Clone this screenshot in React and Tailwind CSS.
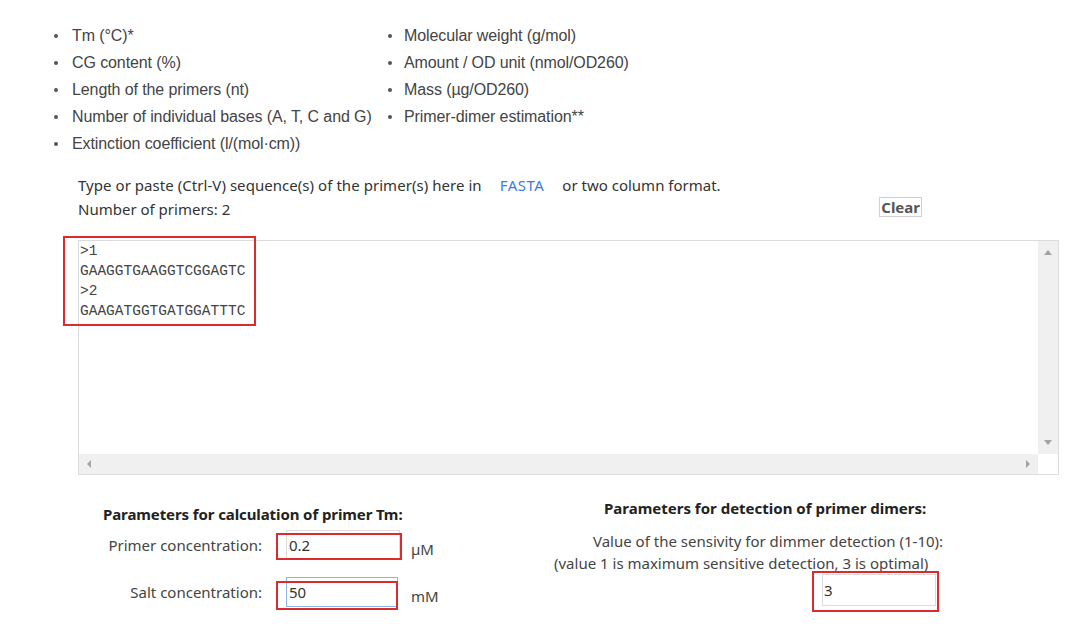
import React from "react";

const leftItems = [
  "Tm (°C)*",
  "CG content (%)",
  "Length of the primers (nt)",
  "Number of individual bases (A, T, C and G)",
  "Extinction coefficient (l/(mol·cm))",
];

const rightItems = [
  "Molecular weight (g/mol)",
  "Amount / OD unit (nmol/OD260)",
  "Mass (µg/OD260)",
  "Primer-dimer estimation**",
];

function Bullet({ children, gap }) {
  return (
    <li className="flex items-center h-[27px]">
      <span className={`w-[4px] h-[4px] rounded-full bg-[#555] shrink-0 ${gap}`} />
      <span>{children}</span>
    </li>
  );
}

function App() {
  return (
    <div className="w-[1070px] h-[628px] bg-white overflow-hidden text-[#444]">
      {/* feature list */}
      <div className="flex pt-[22px] pl-[54px] font-['Liberation_Sans',Arial,sans-serif] text-[16px] tracking-[-0.1px]">
        <ul className="w-[334px]">
          {leftItems.map((item) => (
            <Bullet key={item} gap="mr-[14px]">{item}</Bullet>
          ))}
        </ul>
        <ul>
          {rightItems.map((item) => (
            <Bullet key={item} gap="mr-[12px]">{item}</Bullet>
          ))}
        </ul>
      </div>

      <div className="ml-[78px] mt-[16px] font-['Noto_Sans',sans-serif] text-[15px] text-[#333]">
        <div className="flex items-center h-[24px]">
          <span className="tracking-[0.05px]">Type or paste (Ctrl-V) sequence(s) of the primer(s) here in</span>
          <a className="ml-[18px] text-[#3b7ddd] tracking-[0.5px]">FASTA</a>
          <span className="ml-[18px]">or two column format.</span>
        </div>
        <div className="flex items-center justify-between w-[844px] h-[24px]">
          <span>Number of primers: 2</span>
          <button className="h-[20px] px-[1px] border border-[#d0d0d0] bg-white font-bold text-[#555] leading-[18px] -mt-[4px]">
            Clear
          </button>
        </div>
      </div>

      {/* sequence box */}
      <div className="relative ml-[78px] mt-[19px] w-[981px] h-[235px] border border-[#dcdcdc] flex flex-col">
        <div className="flex flex-1">
          <div className="flex-1 pl-[1px] font-['Liberation_Mono',monospace] text-[14.5px] leading-[20px] text-[#444]">
            <div>&gt;1</div>
            <div>GAAGGTGAAGGTCGGAGTC</div>
            <div>&gt;2</div>
            <div>GAAGATGGTGATGGATTTC</div>
          </div>
          <div className="w-[20px] bg-[#f0f0f0] flex flex-col items-center justify-between py-[9px]">
            <span className="w-0 h-0 border-x-[4px] border-x-transparent border-b-[5px] border-b-[#a3a3a3]" />
            <span className="w-0 h-0 border-x-[4px] border-x-transparent border-t-[5px] border-t-[#a3a3a3]" />
          </div>
        </div>
        <div className="flex h-[20px]">
          <div className="flex-1 bg-[#f0f0f0] flex items-center justify-between px-[8px]">
            <span className="w-0 h-0 border-y-[4px] border-y-transparent border-r-[4px] border-r-[#a3a3a3]" />
            <span className="w-0 h-0 border-y-[4px] border-y-transparent border-l-[4px] border-l-[#a3a3a3]" />
          </div>
          <div className="w-[20px] bg-white" />
        </div>
        <div className="absolute left-[-16px] top-[-5px] w-[193px] h-[90px] border-2 border-[#dc2b2f]" />
      </div>

      {/* parameters */}
      <div className="flex mt-[22px] font-['Noto_Sans',sans-serif] text-[15px] text-[#444]">
        <div className="w-[554px] pl-[103px] pt-[6px]">
          <div className="h-[22px] leading-[22px] font-bold text-[#222] tracking-[-0.1px]">
            Parameters for calculation of primer Tm:
          </div>
          <div className="flex items-center mt-[5px]">
            <span className="w-[159px] text-right">Primer concentration:</span>
            <div className="relative ml-[24px] w-[114px] h-[30px] border border-[#dcdcdc] pl-[2px] leading-[28px] text-[#333]">
              0.2
              <div className="absolute left-[-11px] top-[2px] w-[126px] h-[27px] border-2 border-[#dc2b2f]" />
            </div>
            <span className="ml-[11px] mt-[8px]">µM</span>
          </div>
          <div className="flex items-center mt-[16px]">
            <span className="w-[159px] text-right">Salt concentration:</span>
            <div className="relative ml-[24px] w-[112px] h-[30px] border border-[#8bb8e8] pl-[2px] leading-[28px] text-[#333]">
              50
              <div className="absolute left-[-11px] top-[3px] w-[122px] h-[29px] border-2 border-[#dc2b2f]" />
            </div>
            <span className="ml-[13px] mt-[8px]">mM</span>
          </div>
        </div>
        <div>
          <div className="ml-[50px] h-[22px] leading-[22px] font-bold text-[#222]">
            Parameters for detection of primer dimers:
          </div>
          <div className="ml-[39px] mt-[11px] h-[22px] leading-[22px]">
            Value of the sensivity for dimmer detection (1-10):
          </div>
          <div className="h-[22px] leading-[22px]">
            (value 1 is maximum sensitive detection, 3 is optimal)
          </div>
          <div className="relative ml-[268px] w-[114px] h-[32px] border border-[#dcdcdc] pl-[1px] leading-[30px] text-[#333]">
            3
            <div className="absolute left-[-11px] top-[-4px] w-[127px] h-[41px] border-2 border-[#dc2b2f]" />
          </div>
        </div>
      </div>
    </div>
  );
}

export default App;
